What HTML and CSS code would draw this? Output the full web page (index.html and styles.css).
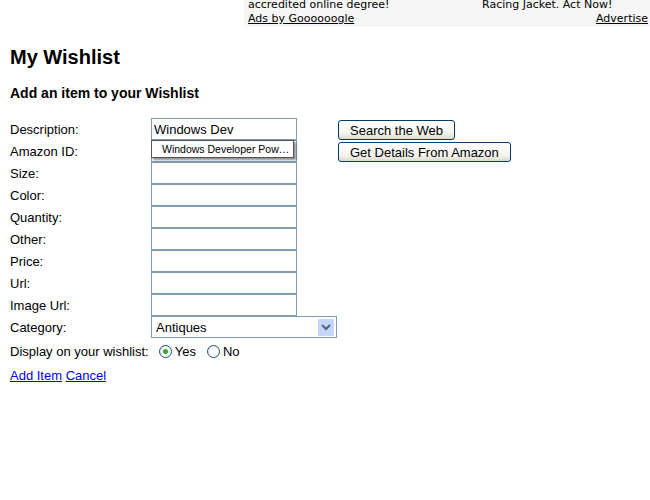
FILE: index.html
```html
<!DOCTYPE html>
<html>
<head>
    <title>My Wishlist</title>
    <link rel="stylesheet" href="styles.css">
</head>
<body>
    <div class="ads">
        <div class="ads-units">
            <div class="ad">accredited online degree!</div>
            <div class="ad">Racing Jacket. Act Now!</div>
        </div>
        <div class="ads-footer">
            <a href="#">Ads by Goooooogle</a>
            <a href="#">Advertise</a>
        </div>
    </div>

    <div class="page">
        <h1 class="page-title">My Wishlist</h1>
        <h2 class="section-title">Add an item to your Wishlist</h2>

        <form class="item-form">
            <div class="form-grid">
                <label class="label">Description:</label>
                <div class="field">
                    <input class="text-input" type="text" value="Windows Dev">
                    <div class="suggest">Windows Developer Pow…</div>
                </div>
                <button type="button" class="btn side-btn">Search the Web</button>

                <label class="label">Amazon ID:</label>
                <input class="text-input field" type="text">
                <button type="button" class="btn side-btn">Get Details From Amazon</button>

                <label class="label">Size:</label>
                <input class="text-input field" type="text">

                <label class="label">Color:</label>
                <input class="text-input field" type="text">

                <label class="label">Quantity:</label>
                <input class="text-input field" type="text">

                <label class="label">Other:</label>
                <input class="text-input field" type="text">

                <label class="label">Price:</label>
                <input class="text-input field" type="text">

                <label class="label">Url:</label>
                <input class="text-input field" type="text">

                <label class="label">Image Url:</label>
                <input class="text-input field" type="text">

                <label class="label">Category:</label>
                <div class="select-box">
                    <select class="select">
                        <option>Antiques</option>
                        <option>Books</option>
                        <option>Electronics</option>
                    </select>
                    <span class="select-arrow">
                        <svg width="16" height="16" viewBox="0 0 16 16">
                            <path d="M4 6 L8 10 L12 6" fill="none" stroke="#4d6185" stroke-width="2"/>
                        </svg>
                    </span>
                </div>
            </div>

            <div class="display-row">
                <span>Display on your wishlist:</span>
                <label class="radio-label first"><input class="radio" type="radio" name="display" checked>Yes</label>
                <label class="radio-label"><input class="radio" type="radio" name="display">No</label>
            </div>

            <div class="actions">
                <a href="#">Add Item</a> <a href="#">Cancel</a>
            </div>
        </form>
    </div>
</body>
</html>
```

FILE: styles.css
```css
body {
    font-family: "Liberation Sans", Arial, sans-serif;
    font-size: 13px;
    margin: 0;
    padding: 0;
    background: white;
    color: black;
}
.ads {
    margin-left: 244px;
    height: 27px;
    overflow: hidden;
    background: #f6f6f6;
    font-family: "DejaVu Sans", Verdana, sans-serif;
    font-size: 11px;
    line-height: 15px;
}
.ads-units {
    display: grid;
    grid-template-columns: 234px auto;
    margin-top: -3px;
    padding-left: 4px;
}
.ads-footer {
    display: flex;
    justify-content: space-between;
    margin-top: -1px;
    padding: 0 2px 0 4px;
}
.ads-footer a {
    color: black;
}
.page {
    padding: 0 10px;
}
.page-title {
    margin: 19px 0 0;
    font-size: 20px;
    line-height: 23px;
}
.section-title {
    margin: 16px 0 0;
    font-size: 14px;
    line-height: 16px;
}
.item-form {
    margin-top: 17px;
}
.form-grid {
    display: grid;
    grid-template-columns: 141px 147px 40px auto;
    grid-auto-rows: 22px;
}
.label {
    grid-column: 1;
    align-self: center;
    line-height: 15px;
}
.field {
    grid-column: 2;
    position: relative;
}
.text-input {
    box-sizing: border-box;
    width: 146px;
    height: 22px;
    margin: 0;
    padding: 0 2px;
    border: 1px solid #7f9db9;
    font-family: "Liberation Sans", Arial, sans-serif;
    font-size: 13px;
    color: black;
}
.suggest {
    position: absolute;
    top: 22px;
    left: 0;
    z-index: 1;
    box-sizing: border-box;
    width: 143px;
    height: 18px;
    padding-left: 10px;
    border: 1px solid #555;
    background: white;
    box-shadow: 2px 2px 2px rgba(0,0,0,0.45);
    font-size: 10.5px;
    line-height: 16px;
    white-space: nowrap;
}
.btn {
    box-sizing: border-box;
    height: 20px;
    padding: 0 11px;
    border: 1px solid #003c74;
    border-radius: 3px;
    background: linear-gradient(#ffffff, #f3f3ee 70%, #dcd8cc);
    font-family: "Liberation Sans", Arial, sans-serif;
    font-size: 13px;
    color: black;
}
.side-btn {
    grid-column: 4;
    justify-self: start;
    margin-top: 2px;
}
.select-box {
    grid-column: 2 / 4;
    display: flex;
    align-items: center;
    box-sizing: border-box;
    width: 186px;
    height: 22px;
    padding: 1px;
    border: 1px solid #7f9db9;
}
.select {
    flex: 1;
    height: 18px;
    border: none;
    padding: 0 0 0 3px;
    appearance: none;
    background: white;
    font-family: "Liberation Sans", Arial, sans-serif;
    font-size: 13px;
    color: black;
}
.select-arrow {
    display: flex;
    width: 16px;
    height: 17px;
    margin-right: 1px;
    align-items: center;
    justify-content: center;
    background: #c6d6fb;
    border-radius: 1px;
}
.display-row {
    display: flex;
    align-items: center;
    height: 26px;
}
.radio-label {
    display: flex;
    align-items: center;
    margin-right: 7px;
}
.radio {
    appearance: none;
    box-sizing: border-box;
    width: 13px;
    height: 13px;
    margin: 0 3px 0 4px;
    border: 1px solid #1c5180;
    border-radius: 50%;
    background: radial-gradient(circle at 60% 60%, #ffffff 40%, #dcdcd6);
    display: flex;
    align-items: center;
    justify-content: center;
}
.radio-label.first .radio {
    margin-left: 10px;
}
.radio:checked::after {
    content: "";
    width: 5px;
    height: 5px;
    border-radius: 50%;
    background: #2fa82f;
}
.actions {
    line-height: 22px;
    margin-top: 1px;
}
.actions a {
    color: #0000ee;
}
```
